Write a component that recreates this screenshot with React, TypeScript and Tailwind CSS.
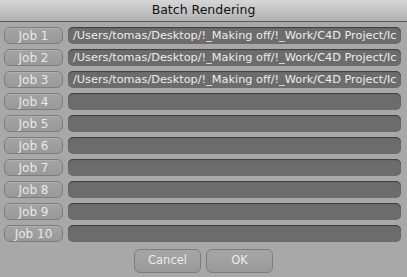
const PATH = "/Users/tomas/Desktop/!_Making off/!_Work/C4D Project/Ic";

const JOBS = [
  { name: "Job 1", path: PATH },
  { name: "Job 2", path: PATH },
  { name: "Job 3", path: PATH },
  { name: "Job 4", path: "" },
  { name: "Job 5", path: "" },
  { name: "Job 6", path: "" },
  { name: "Job 7", path: "" },
  { name: "Job 8", path: "" },
  { name: "Job 9", path: "" },
  { name: "Job 10", path: "" },
];

export default function App() {
  return (
    <div
      className="w-[407px] h-[277px] bg-[#a8a8a8] flex flex-col overflow-hidden"
      style={{ fontFamily: '"DejaVu Sans", "Liberation Sans", sans-serif' }}
    >
      {/* Title bar */}
      <div className="h-[22px] shrink-0 bg-gradient-to-b from-[#d6d6d6] to-[#b2b2b2] border-b border-[#5a5a5a] flex items-center justify-center">
        <span className="text-[12.5px] text-[#111] leading-none">Batch Rendering</span>
      </div>

      {/* Job rows */}
      <div className="flex flex-col gap-[5px] pt-[5px] pl-[4px] pr-[6px]">
        {JOBS.map((job) => (
          <div key={job.name} className="flex items-center gap-[5px] h-[17px]">
            <div className="w-[59px] h-[17px] shrink-0 rounded-[6px] border border-[#7c7c7c] bg-gradient-to-b from-[#a4a4a4] to-[#999] flex items-center justify-center shadow-[inset_0_1px_0_rgba(255,255,255,0.15)]">
              <span className="text-[12px] text-[#e8e8e8] leading-none">{job.name}</span>
            </div>
            <div className="flex-1 h-[17px] rounded-[5px] bg-[#6c6c6c] shadow-[inset_0_1px_1px_rgba(0,0,0,0.45)] flex items-center pl-[5px] overflow-hidden">
              <span className="text-[11.3px] text-[#ececec] leading-none whitespace-nowrap">{job.path}</span>
            </div>
          </div>
        ))}
      </div>

      {/* Footer buttons */}
      <div className="flex justify-center gap-[5px] pt-[7px]">
        <button className="w-[67px] h-[24px] rounded-[6px] border border-[#7c7c7c] bg-gradient-to-b from-[#a6a6a6] to-[#9a9a9a] text-[11.5px] text-[#ececec] leading-none">
          Cancel
        </button>
        <button className="w-[67px] h-[24px] rounded-[6px] border border-[#7c7c7c] bg-gradient-to-b from-[#a6a6a6] to-[#9a9a9a] text-[11.5px] text-[#ececec] leading-none">
          OK
        </button>
      </div>
    </div>
  );
}
